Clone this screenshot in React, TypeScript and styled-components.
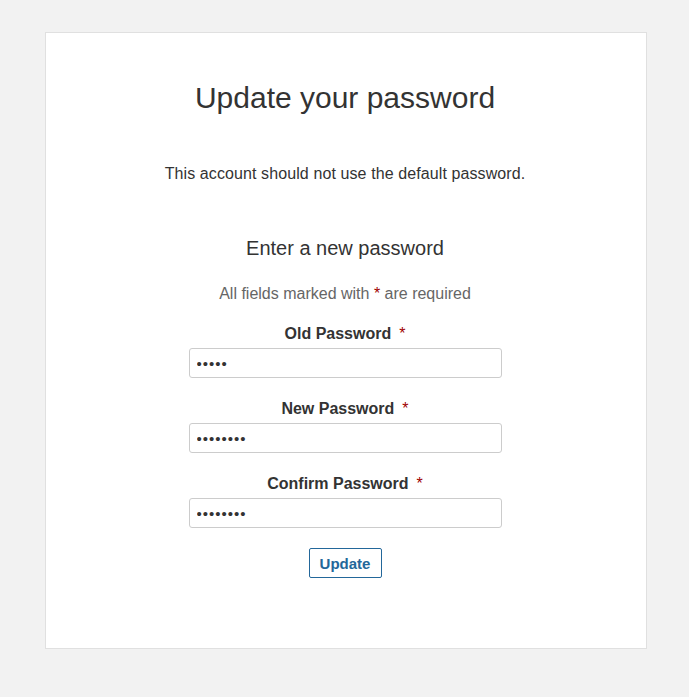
import styled, { createGlobalStyle } from "styled-components";

const GlobalStyle = createGlobalStyle`
  html, body {
    margin: 0;
    padding: 0;
    background: #f2f2f2;
    font-family: "Liberation Sans", Arial, sans-serif;
    color: #333;
  }
`;

const fields = [
  { id: "old", label: "Old Password", value: "12345" },
  { id: "new", label: "New Password", value: "abcdefgh" },
  { id: "confirm", label: "Confirm Password", value: "abcdefgh" },
];

export default function App() {
  return (
    <>
      <GlobalStyle />
      <Page>
        <Card>
          <Title>Update your password</Title>
          <Notice>This account should not use the default password.</Notice>
          <SubTitle>Enter a new password</SubTitle>
          <Hint>
            All fields marked with <Required>*</Required> are required
          </Hint>
          <Form onSubmit={(e) => e.preventDefault()}>
            {fields.map((f) => (
              <Field key={f.id}>
                <Label htmlFor={f.id}>
                  {f.label}
                  <Required $spaced>*</Required>
                </Label>
                <Input id={f.id} type="password" defaultValue={f.value} />
              </Field>
            ))}
            <Button type="submit">Update</Button>
          </Form>
        </Card>
      </Page>
    </>
  );
}

const Page = styled.div`
  padding: 32px 0 0 45px;
  min-height: 697px;
  box-sizing: border-box;
`;

const Card = styled.div`
  width: 602px;
  height: 617px;
  box-sizing: border-box;
  background: #fff;
  border: 1px solid #e0e0e0;
  padding: 47px 2px 0 0;
  display: flex;
  flex-direction: column;
  align-items: center;
  text-align: center;
`;

const Title = styled.h1`
  margin: 0;
  font-size: 30px;
  line-height: 36px;
  font-weight: 400;
  color: #333;
`;

const Notice = styled.p`
  margin: 48px 0 0;
  font-size: 16px;
  line-height: 20px;
  letter-spacing: 0.1px;
  color: #333;
`;

const SubTitle = styled.h2`
  margin: 52px 0 0;
  font-size: 20px;
  line-height: 24px;
  font-weight: 400;
  color: #333;
`;

const Hint = styled.p`
  margin: 24px 0 0;
  font-size: 16px;
  line-height: 20px;
  color: #666;
`;

const Required = styled.span<{ $spaced?: boolean }>`
  color: #a00000;
  font-weight: 400;
  margin-left: ${(p) => (p.$spaced ? "8px" : "0")};
`;

const Form = styled.form`
  display: flex;
  flex-direction: column;
  align-items: center;
  margin-top: 20px;
  gap: 21px;
`;

const Field = styled.div`
  display: flex;
  flex-direction: column;
  align-items: center;
  gap: 4px;
`;

const Label = styled.label`
  font-size: 16px;
  line-height: 20px;
  font-weight: 700;
  color: #333;
`;

const Input = styled.input`
  width: 313px;
  height: 30px;
  box-sizing: border-box;
  border: 1px solid #ccc;
  border-radius: 3px;
  padding: 0 7px;
  font-family: "Liberation Sans", Arial, sans-serif;
  font-size: 15px;
  letter-spacing: 1px;
  color: #333;
  background: #fff;
  outline: none;
`;

const Button = styled.button`
  width: 73px;
  height: 30px;
  margin-top: -1px;
  box-sizing: border-box;
  background: #fff;
  border: 1px solid #23679a;
  border-radius: 2px;
  color: #23679a;
  font-family: "Liberation Sans", Arial, sans-serif;
  font-size: 15px;
  font-weight: 700;
  cursor: pointer;
  padding: 0;
`;
